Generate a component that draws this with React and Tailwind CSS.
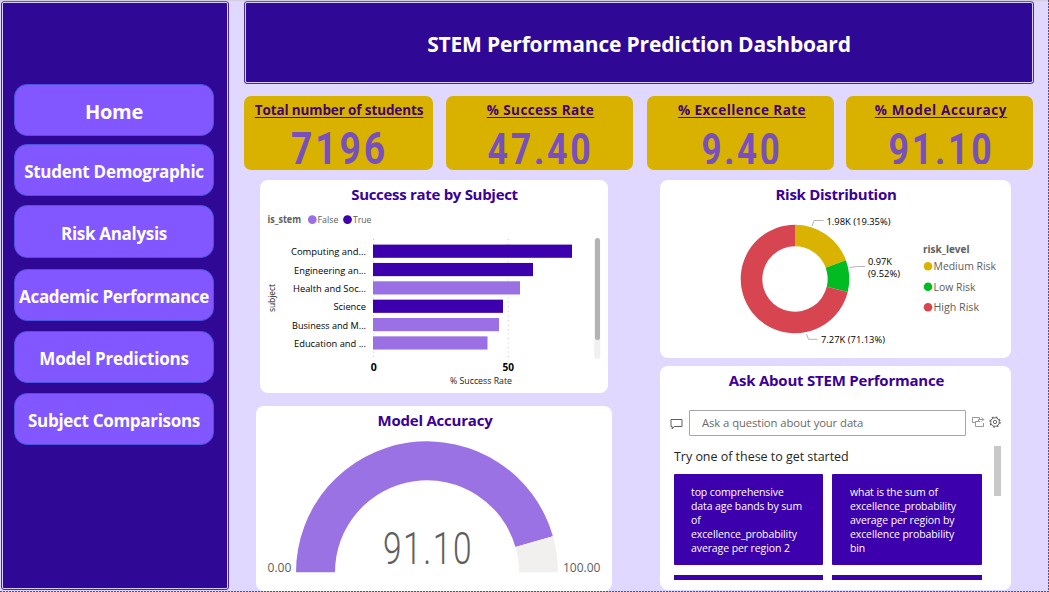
import React from "react";

const NAV = [
  { label: "Home", cls: "mt-[81px] h-[52px] text-[20px] tracking-[-0.3px]" },
  { label: "Student Demographic", cls: "mt-2 h-[52px] text-[17px] tracking-[-0.28px]" },
  { label: "Risk Analysis", cls: "mt-[9px] h-[53px] text-[17px] tracking-[-0.3px]" },
  { label: "Academic Performance", cls: "mt-[11px] h-[52px] text-[17px] tracking-[-0.35px]" },
  { label: "Model Predictions", cls: "mt-[10px] h-[52px] text-[17px] tracking-[-0.2px]" },
  { label: "Subject Comparisons", cls: "mt-[10px] h-[52px] text-[17px] tracking-[-0.3px]" },
];

const KPIS = [
  { label: "Total number of students", value: "7196", len: 97, cx: 95.5, cls: "w-[189px]", title: "tracking-[-0.12px] pl-px" },
  { label: "% Success Rate", value: "47.40", len: 106, cx: 94.5, cls: "ml-[13px] w-[187px]", title: "tracking-[0.42px] pl-[2px]" },
  { label: "% Excellence Rate", value: "9.40", len: 81, cx: 95, cls: "ml-[14px] w-[187px]", title: "tracking-[0.45px] pl-[3px]" },
  { label: "% Model Accuracy", value: "91.10", len: 106, cx: 95.5, cls: "ml-3 w-[187px]", title: "tracking-[0.65px] pl-[3px]" },
];

const BARS = [
  { label: "Computing and...", w: 199, len: 75, stem: true },
  { label: "Engineering an...", w: 160, len: 72, stem: true },
  { label: "Health and Soc...", w: 147, len: 73, stem: false },
  { label: "Science", w: 130, len: 32.5, stem: true },
  { label: "Business and M...", w: 126, len: 74, stem: false },
  { label: "Education and ...", w: 114.5, len: 72, stem: false },
];

const LEVELS = [
  { label: "Medium Risk", color: "#d9b300", len: 62.5 },
  { label: "Low Risk", color: "#00bb22", len: 42 },
  { label: "High Risk", color: "#d64550", len: 45.5 },
];

function T({ x, y, len, children, ...rest }) {
  return (
    <text x={x} y={y} textLength={len} lengthAdjust="spacingAndGlyphs" {...rest}>
      {children}
    </text>
  );
}

function polar(cx, cy, r, deg) {
  const a = (deg * Math.PI) / 180;
  return [cx + r * Math.sin(a), cy - r * Math.cos(a)];
}

function ring(cx, cy, R, r, from, to) {
  const large = to - from > 180 ? 1 : 0;
  const [a, b] = polar(cx, cy, R, from);
  const [c, d] = polar(cx, cy, R, to);
  const [e, f] = polar(cx, cy, r, to);
  const [g, h] = polar(cx, cy, r, from);
  return `M${a} ${b}A${R} ${R} 0 ${large} 1 ${c} ${d}L${e} ${f}A${r} ${r} 0 ${large} 0 ${g} ${h}Z`;
}

function CardTitle({ children, className }) {
  return (
    <h2 className={`mb-px text-center text-[15px] font-bold leading-5 text-[#3a0099] ${className}`}>{children}</h2>
  );
}

function SubjectChart() {
  return (
    <section className="ml-4 h-[213px] w-[348px] rounded-[8px] bg-white pt-[4px]">
      <CardTitle className="pl-px tracking-[-0.3px]">Success rate by Subject</CardTitle>
      <svg className="block" width="348" height="184" viewBox="260 205 348 184">
        <T x="267.5" y="223" len="33.5" fontSize="9.8" fontWeight="700" fill="#605e5c">is_stem</T>
        <circle cx="312.3" cy="219.6" r="4.4" fill="#9b70e4" />
        <T x="317.5" y="223" len="21" fontSize="9.8" fill="#605e5c">False</T>
        <circle cx="347.5" cy="219.6" r="4.4" fill="#3d00ad" />
        <T x="353" y="223" len="18.5" fontSize="9.8" fill="#605e5c">True</T>
        <path d="M373.5 239V360M508.3 239V360" stroke="#c8c8c8" strokeDasharray="1 3.5" />
        {BARS.map((b, i) => (
          <g key={b.label}>
            <T x={366 - b.len} y={255.4 + i * 18.35} len={b.len} fontSize="9.8" fill="#000">{b.label}</T>
            <rect x="373" y={244.6 + i * 18.35} width={b.w} height="13.2" fill={b.stem ? "#3d00ad" : "#9b70e4"} />
          </g>
        ))}
        <T x="370.7" y="371" len="6" fontSize="10" fontWeight="700" fill="#000">0</T>
        <T x="502.5" y="371" len="11.5" fontSize="10" fontWeight="700" fill="#000">50</T>
        <T x="450" y="384" len="62" fontSize="8.8" fill="#222">% Success Rate</T>
        <T x="0" y="0" len="28" fontSize="8.8" fill="#222" transform="translate(275 312) rotate(-90)">subject</T>
        <rect x="594.3" y="238" width="6" height="121" rx="3" fill="#f0f0f0" />
        <rect x="595" y="238" width="5" height="102" rx="2.5" fill="#b3b3b3" />
      </svg>
    </section>
  );
}

function Gauge() {
  return (
    <section className="ml-3 mt-[13px] h-[185px] w-[356px] rounded-[8px] bg-white pt-[4px]">
      <CardTitle className="pl-[2px] tracking-[-0.22px]">Model Accuracy</CardTitle>
      <svg className="block" width="356" height="156" viewBox="256 431 356 156">
        <path d={ring(427, 572.3, 131, 92, -90, 73.98)} fill="#9b72e4" />
        <path d={ring(427, 572.3, 131, 92, 73.98, 90)} fill="#f1f0ef" />
        <T x="383" y="564.3" len="90" fontSize="43.5" fontWeight="300" letterSpacing="2" fill="#605e5c" fontFamily="Roboto">91.10</T>
        <T x="267.5" y="572" len="24" fontSize="12" fill="#605e5c">0.00</T>
        <T x="563" y="572" len="37.5" fontSize="12" fill="#605e5c">100.00</T>
      </svg>
    </section>
  );
}

function RiskChart() {
  return (
    <section className="h-[178px] w-[351px] rounded-[8px] bg-white pt-[4px]">
      <CardTitle className="pl-px tracking-[-0.28px]">Risk Distribution</CardTitle>
      <svg className="block" width="351" height="153" viewBox="660 205 351 153">
        <path d={ring(795, 279, 54.3, 32.7, 0, 69.66)} fill="#d9b300" />
        <path d={ring(795, 279, 54.3, 32.7, 69.66, 103.93)} fill="#00bb22" />
        <path d={ring(795, 279, 54.3, 32.7, 103.93, 360)} fill="#d64550" />
        <path d="M812 226l2-5.5h9.5M849.5 267.5l8-1h7.5M806.5 334l2 5.3h9" fill="none" stroke="#b5b5b5" />
        <g fontSize="9.8" fill="#000">
          <T x="826.5" y="225.3" len="64">1.98K (19.35%)</T>
          <T x="868" y="264.5" len="24">0.97K</T>
          <T x="868" y="277.3" len="32">(9.52%)</T>
          <T x="821" y="343.3" len="64">7.27K (71.13%)</T>
        </g>
        <T x="923" y="253" len="46.5" fontSize="11" fontWeight="700" fill="#605e5c">risk_level</T>
        {LEVELS.map((l, i) => (
          <g key={l.label}>
            <circle cx="928" cy={266.2 + i * 20.5} r="4.3" fill={l.color} />
            <T x="933.5" y={270.3 + i * 20.5} len={l.len} fontSize="11.2" fill="#605e5c">{l.label}</T>
          </g>
        ))}
      </svg>
    </section>
  );
}

function AskPanel() {
  return (
    <section className="mt-2 h-[224px] w-[351px] overflow-hidden rounded-[8px] bg-white pt-[4px]">
      <CardTitle className="pl-[2px] tracking-[-0.22px]">Ask About STEM Performance</CardTitle>
      <div className="mt-[20px] flex h-[26px] items-center pl-[10px]">
        <svg className="mt-[2px]" width="13" height="12" viewBox="0 0 13 12" fill="none" stroke="#605e5c">
          <path d="M1 1.5h11v7H4.2L2.2 11V8.5H1Z" />
        </svg>
        <div className="ml-[6px] flex h-[26px] w-[277px] items-center rounded-[1px] border border-[#a6a6a6] pl-[12px] text-[11.3px] tracking-[-0.42px] text-[#6b6966] [word-spacing:0.3px]">
          <span className="tracking-[-0.15px]">Ask a question about your data</span>
        </div>
        <svg className="mb-[3px] ml-[6px]" width="13" height="12" viewBox="0 0 13 12" fill="none" stroke="#8f8d8b">
          <path d="M3.5 6.500H.5V1.500h7v1.500M8 5.500H3.500v5h8V7M6.500 5.500V3.500h5M9.800 1.500l2 2-2 2" strokeWidth=".9" />
        </svg>
        <svg className="mb-[3px] ml-[4px]" width="12" height="12" viewBox="0 0 12 12" fill="none" stroke="#605e5c" strokeWidth=".9">
          <circle cx="6" cy="6" r="4.300" />
          <circle cx="6" cy="6" r="1.700" />
          <circle cx="6" cy="6" r="5.100" strokeWidth="1.100" strokeDasharray="2 2.005" />
        </svg>
      </div>
      <div className="flex">
        <div className="ml-[14px] w-[308px]">
          <p className="mt-[11px] text-[12.5px] leading-5 tracking-[-0.03px] text-[#252423]">Try one of these to get started</p>
          <div className="mt-[7px] grid grid-cols-[149px_150px] gap-x-[9px] text-[10.5px] leading-[14px] tracking-[-0.1px] text-white">
            <div className="h-[91px] whitespace-nowrap rounded-[1px] bg-[#3d00ad] pl-[17px] pt-[11px]">
              top comprehensive<br />data age bands by sum<br />of<br />excellence_probability<br />average per region 2
            </div>
            <div className="h-[91px] whitespace-nowrap rounded-[1px] bg-[#3d00ad] pl-[18px] pt-[11px]">
              what is the sum of<br />excellence_probability<br />average per region by<br />excellence probability<br />bin
            </div>
            <div className="mt-[10px] h-[5px] bg-[#3d00ad]" />
            <div className="mt-[10px] h-[5px] bg-[#3d00ad]" />
          </div>
        </div>
        <div className="ml-[12px] mt-[10px] h-[50px] w-[7px] bg-[#c8c8c8]" />
      </div>
    </section>
  );
}

export default function App() {
  return (
    <div className="relative flex h-[592px] w-[1049px] overflow-hidden bg-[#e1d8ff] font-['Open_Sans',sans-serif]">
      <aside className="ml-px mt-px h-[589px] w-[228px] shrink-0 rounded-[3px] border border-[#4a2a96] bg-[#d9cdfa] p-px">
        <nav className="flex h-full flex-col rounded-[1px] bg-[#2f0896] pl-[11px]">
          {NAV.map((n) => (
            <button
              key={n.label}
              className={`flex w-[200px] shrink-0 items-center justify-center whitespace-nowrap rounded-[13px] border border-[#4a55dc] bg-[#8257ff] pt-[4px] font-bold text-white ${n.cls}`}
            >
              {n.label}
            </button>
          ))}
        </nav>
      </aside>
      <main className="ml-[15px] flex w-[790px] flex-col">
        <header className="mt-px h-[83px] rounded-[3px] border border-[#4a2a96] bg-[#d9cdfa] p-px">
          <h1 className="flex h-full items-center justify-center rounded-[1px] bg-[#2f0896] pt-[4px] text-[21px] font-bold tracking-[-0.17px] text-white">
            STEM Performance Prediction Dashboard
          </h1>
        </header>
        <div className="mt-3 flex">
          {KPIS.map((k) => (
            <section key={k.label} className={`h-[74px] shrink-0 rounded-[7px] bg-[#d9b200] pt-[4px] ${k.cls}`}>
              <h2 className={`whitespace-nowrap text-center text-[13.5px] font-bold leading-5 text-[#43066f] underline decoration-1 underline-offset-2 ${k.title}`}>
                {k.label}
              </h2>
              <svg className="block" width="187" height="44" viewBox="0 0 187 44">
                <T x={k.cx - k.len / 2} y={k.value === "7196" ? 43.8 : 44.8} len={k.len} fontSize="45" fontWeight="700" letterSpacing="3.5" fill="#7750bd" fontFamily="Roboto">
                  {k.value}
                </T>
              </svg>
            </section>
          ))}
        </div>
        <div className="mt-[10px] flex">
          <div className="w-[416px]">
            <SubjectChart />
            <Gauge />
          </div>
          <div>
            <RiskChart />
            <AskPanel />
          </div>
        </div>
      </main>
      <div className="absolute inset-x-0 top-0 h-[2px] bg-gradient-to-b from-[#cfcbd9] to-transparent" />
      <div className="absolute inset-x-0 bottom-0 h-px bg-[repeating-linear-gradient(90deg,#5d5080_0_2px,#d9d2ee_2px_3px)]" />
      <div className="absolute inset-y-0 right-0 w-px bg-[repeating-linear-gradient(180deg,#5d5080_0_2px,#d9d2ee_2px_3px)]" />
    </div>
  );
}
